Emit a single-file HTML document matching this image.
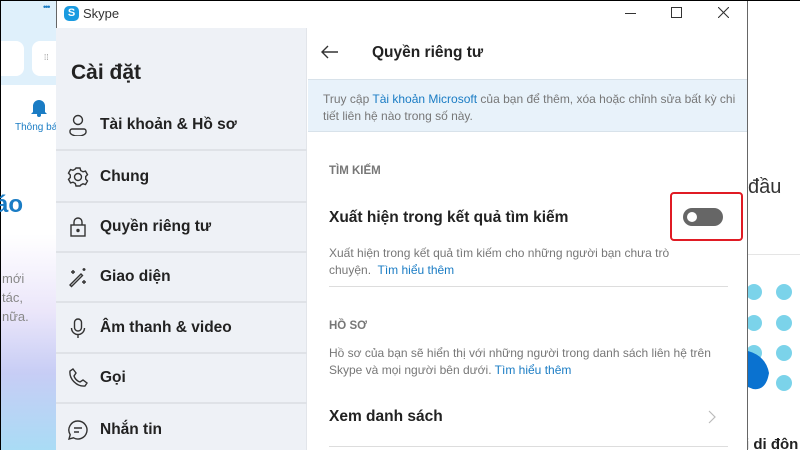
<!DOCTYPE html>
<html style="overflow:hidden;width:800px;height:450px"><head><meta charset="utf-8"><style>
*{margin:0;padding:0;box-sizing:border-box}
body{width:800px;height:450px;overflow:hidden;position:relative;font-family:"Liberation Sans","DejaVu Sans",sans-serif;background:#fff;border:1px solid #000}
.abs{position:absolute;white-space:nowrap}
.side{left:55px;top:27px;width:251px;height:423px;background:#eef1f6;border-right:1px solid #e2e5ea}
.item{position:absolute;left:0;width:251px;height:50px;border-bottom:2px solid #dfe2e7;display:flex;align-items:center}
.item svg{position:absolute;left:11px}
.item span{position:absolute;left:44px;font-weight:bold;font-size:15.5px;color:#222}
.t{color:#777;font-size:12px;line-height:16.5px;white-space:normal}
a{color:#1a7cc4;text-decoration:none}
</style></head><body>
<div class="abs" style="left:0;top:0;width:55px;height:84px;background:#dff0fb"></div>
<div class="abs" style="left:0;top:40px;width:23px;height:35px;background:#fff;border-radius:0 8px 8px 0"></div>
<div class="abs" style="left:31px;top:40px;width:24px;height:35px;background:#fff;border-radius:8px 0 0 8px"></div>
<div class="abs" style="left:43px;top:52px;font-size:8px;color:#888">⁞⁞</div>
<div class="abs" style="left:42px;top:1px;font-size:9px;color:#1a7cc4;letter-spacing:-1px">•••</div>
<svg class="abs" style="left:29px;top:97px" width="18" height="20" viewBox="0 0 18 20"><path d="M3 14V8a6 6 0 0 1 12 0v6l2 2H1z" fill="#1a7cc4"/><circle cx="9" cy="17" r="2" fill="#1a7cc4"/></svg>
<div class="abs" style="left:14px;top:121px;font-size:10px;color:#1a7cc4">Thông báo</div>
<div class="abs" style="left:0;top:140px;width:55px;height:310px;background:linear-gradient(#fff 0%,#fff 30%,#ebe6fa 55%,#c7cdf5 75%,#a9dcf5 100%)"></div>
<div class="abs" style="left:-6px;top:190px;font-size:24px;font-weight:bold;color:#1a7cc4">áo</div>
<div class="abs" style="left:1px;top:268px;font-size:13px;color:#888;line-height:19px">mới<br>tác,<br>nữa.</div>
<div class="abs" style="left:747px;top:0;width:53px;height:450px;background:#fff;overflow:hidden">
<div class="abs" style="left:0;top:175px;font-size:20px;color:#333">đầu</div>
<div class="abs" style="left:0;top:253px;width:53px;height:1px;background:#e5e5e5"></div>
<svg class="abs" style="left:0;top:280px" width="53" height="120"><g fill="#7bd3ea"><circle cx="6" cy="11" r="8"/><circle cx="36" cy="11" r="8"/><circle cx="6" cy="42" r="8"/><circle cx="36" cy="42" r="8"/><circle cx="6" cy="72" r="8"/><circle cx="36" cy="72" r="8"/><circle cx="36" cy="102" r="8"/></g><path d="M0 70 Q18 75 21 92 Q18 110 5 108 L0 106z" fill="#0a72d0"/></svg>
<div class="abs" style="left:-3px;top:435px;font-size:15px;font-weight:bold;color:#222">i di đôn</div>
</div>
<div class="abs" style="left:55px;top:0;width:692px;height:450px;background:#fff;border-left:1px solid #666;border-right:1px solid #666"></div>
<div class="abs" style="left:63px;top:5px;width:15px;height:15px;background:#1a9be0;border-radius:5px;color:#fff;font-size:11px;font-weight:bold;text-align:center;line-height:15px">S</div>
<div class="abs" style="left:82px;top:5px;font-size:13px;color:#333">Skype</div>
<div class="abs" style="left:624px;top:12px;width:11px;height:1px;background:#333"></div>
<div class="abs" style="left:670px;top:6px;width:11px;height:11px;border:1px solid #333"></div>
<svg class="abs" style="left:717px;top:6px" width="11" height="11"><path d="M0 0L11 11M11 0L0 11" stroke="#333" stroke-width="1.1"/></svg>
<div class="abs side">
<div class="abs" style="left:15px;top:33px;font-size:21px;font-weight:bold;color:#222">Cài đặt</div>
<div class="item" style="top:73px"><svg width="22" height="22" viewBox="0 0 22 22" fill="none" stroke="#333" stroke-width="1.4"><circle cx="11" cy="6" r="4.5"/><path d="M3 18a8 4 0 0 0 16 0v-1a2 2 0 0 0-2-2H5a2 2 0 0 0-2 2z"/></svg><span>Tài khoản &amp; Hồ sơ</span></div>
<div class="item" style="top:125px"><svg width="22" height="22" viewBox="0 0 22 22" fill="none" stroke="#333" stroke-width="1.4"><circle cx="11" cy="11" r="3.5"/><path d="M9 2h4l.7 2.5 2.3 1.3 2.5-.7 2 3.5-1.8 1.9v2.6l1.8 1.9-2 3.5-2.5-.7-2.3 1.3L13 20H9l-.7-2.5L6 16.2l-2.5.7-2-3.5 1.8-1.9V9L1.5 7.1l2-3.5L6 4.3l2.3-1.3z"/></svg><span>Chung</span></div>
<div class="item" style="top:175px"><svg width="22" height="22" viewBox="0 0 22 22" fill="none" stroke="#333" stroke-width="1.4"><rect x="4" y="9" width="14" height="11"/><path d="M7 9V6a4 4 0 0 1 8 0v3"/><circle cx="11" cy="14.5" r="1" fill="#333"/></svg><span>Quyền riêng tư</span></div>
<div class="item" style="top:225px"><svg width="22" height="22" viewBox="0 0 22 22" fill="none" stroke="#333" stroke-width="1.4"><path d="M3 19L14 8l1.5 1.5L4.5 20.5z"/><path d="M6 4v4M4 6h4M17 2v3M15.5 3.5h3M17 14v4M15 16h4"/></svg><span>Giao diện</span></div>
<div class="item" style="top:276px"><svg width="22" height="22" viewBox="0 0 22 22" fill="none" stroke="#333" stroke-width="1.4"><rect x="7.5" y="2" width="7" height="12" rx="3.5"/><path d="M4.5 11a6.5 6.5 0 0 0 13 0M11 17.5V21"/></svg><span>Âm thanh &amp; video</span></div>
<div class="item" style="top:326px"><svg width="22" height="22" viewBox="0 0 22 22" fill="none" stroke="#333" stroke-width="1.4"><path d="M6 2l3 4-2 3c1 3 3 5 6 6l3-2 4 3-2 3C10 20 2 12 3 4z"/></svg><span>Gọi</span></div>
<div class="item" style="top:377px;border:none"><svg width="22" height="22" viewBox="0 0 22 22" fill="none" stroke="#333" stroke-width="1.4"><path d="M11 2a9 9 0 1 1-4.5 16.8L2 20l1.2-4.3A9 9 0 0 1 11 2z"/><path d="M7 9h8M7 13h5"/></svg><span>Nhắn tin</span></div>
</div>
<svg class="abs" style="left:320px;top:44px" width="18" height="14"><path d="M17 7H2M7 1L1 7l6 6" fill="none" stroke="#333" stroke-width="1.4"/></svg>
<div class="abs" style="left:371px;top:43px;font-size:15.5px;font-weight:bold;color:#222">Quyền riêng tư</div>
<div class="abs" style="left:307px;top:78px;width:439px;height:53px;background:#e8f2fa;border-top:1px solid #d8e2ea;border-bottom:1px solid #d8e2ea"></div>
<div class="abs t" style="left:322px;top:90px;width:420px;color:#777">Truy cập <a>Tài khoản Microsoft</a> của bạn để thêm, xóa hoặc chỉnh sửa bất kỳ chi tiết liên hệ nào trong số này.</div>
<div class="abs" style="left:328px;top:164px;font-size:11.5px;font-weight:bold;color:#777">TÌM KIẾM</div>
<div class="abs" style="left:328px;top:208px;font-size:15.5px;font-weight:bold;color:#222">Xuất hiện trong kết quả tìm kiếm</div>
<div class="abs" style="left:669px;top:191px;width:73px;height:49px;border:2.5px solid #e01b24;border-radius:4px"></div>
<div class="abs" style="left:682px;top:207px;width:40px;height:18px;border-radius:9px;background:#666"></div>
<div class="abs" style="left:686px;top:211px;width:10px;height:10px;border-radius:5px;background:#fff"></div>
<div class="abs t" style="left:328px;top:244px;width:360px">Xuất hiện trong kết quả tìm kiếm cho những người bạn chưa trò chuyện.&nbsp; <a>Tìm hiểu thêm</a></div>
<div class="abs" style="left:328px;top:285px;width:399px;height:1px;background:#ddd"></div>
<div class="abs" style="left:328px;top:319px;font-size:11.5px;font-weight:bold;color:#777">HỒ SƠ</div>
<div class="abs t" style="left:328px;top:344px;width:400px">Hồ sơ của bạn sẽ hiển thị với những người trong danh sách liên hệ trên Skype và mọi người bên dưới. <a>Tìm hiểu thêm</a></div>
<div class="abs" style="left:328px;top:407px;font-size:15.5px;font-weight:bold;color:#222">Xem danh sách</div>
<svg class="abs" style="left:707px;top:409px" width="9" height="14"><path d="M1 1l6 6-6 6" fill="none" stroke="#bbb" stroke-width="1.2"/></svg>
<div class="abs" style="left:328px;top:445px;width:399px;height:1px;background:#ddd"></div>
</body></html>
